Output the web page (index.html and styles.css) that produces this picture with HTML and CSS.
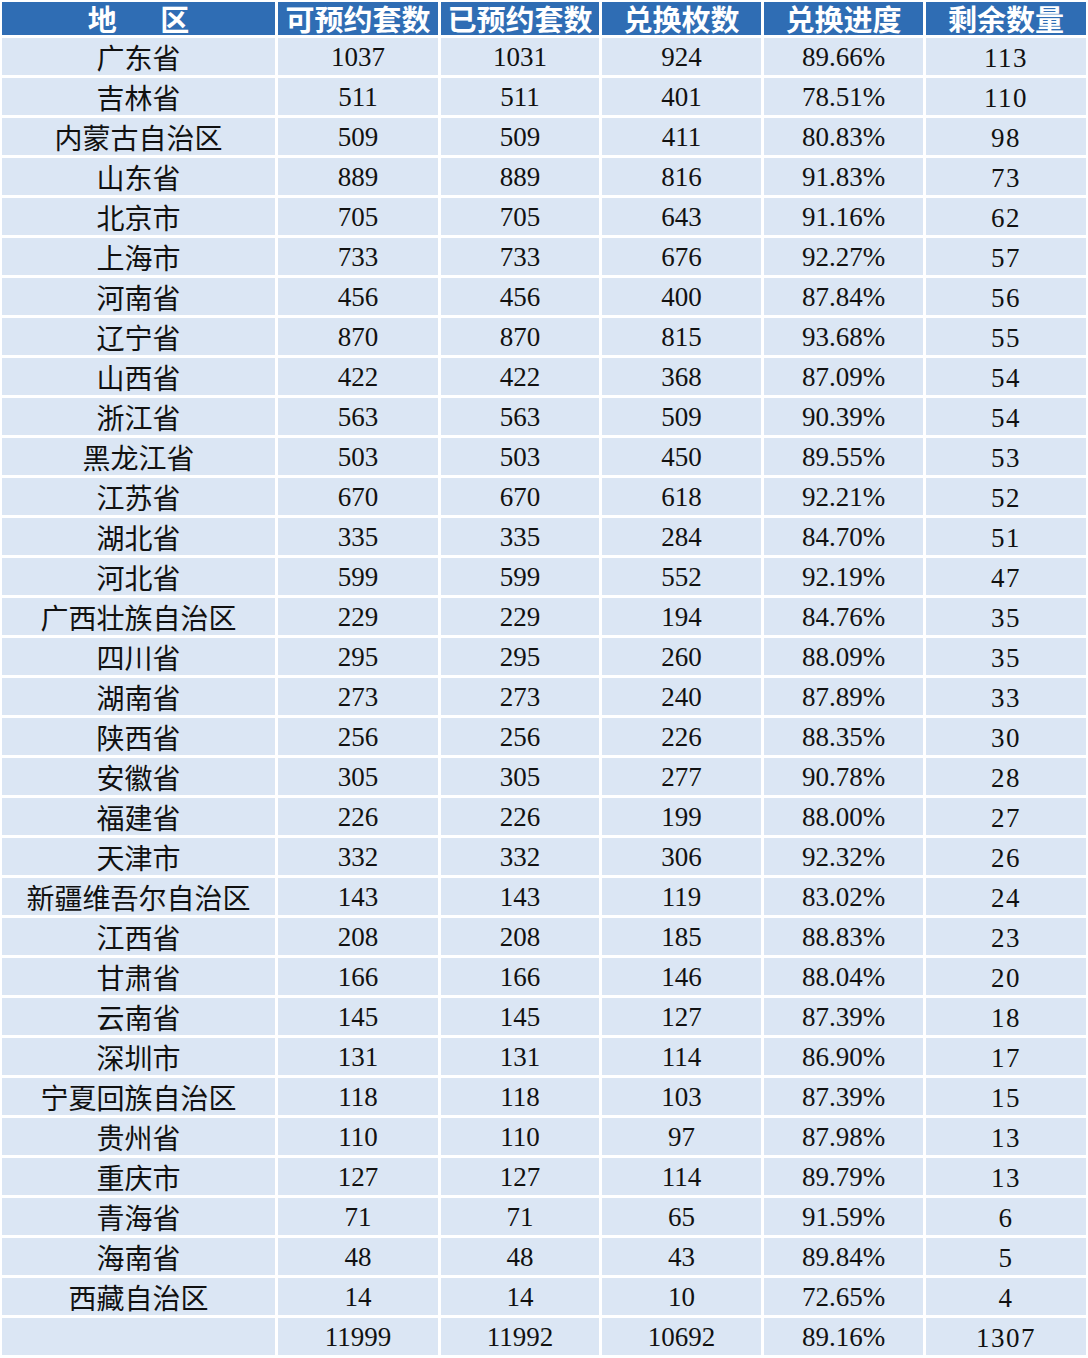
FILE: index.html
```html
<!DOCTYPE html>
<html lang="zh">
<head>
<meta charset="utf-8">
<link rel="stylesheet" href="styles.css">
</head>
<body>
<div class="sheet">
  <div class="h name-h">地&emsp;&ensp;区</div><div class="h">可预约套数</div><div class="h">已预约套数</div><div class="h">兑换枚数</div><div class="h">兑换进度</div><div class="h">剩余数量</div>
  <div class="c n">广东省</div><div class="c">1037</div><div class="c">1031</div><div class="c">924</div><div class="c">89.66%</div><div class="c r">113</div>
  <div class="c n">吉林省</div><div class="c">511</div><div class="c">511</div><div class="c">401</div><div class="c">78.51%</div><div class="c r">110</div>
  <div class="c n">内蒙古自治区</div><div class="c">509</div><div class="c">509</div><div class="c">411</div><div class="c">80.83%</div><div class="c r">98</div>
  <div class="c n">山东省</div><div class="c">889</div><div class="c">889</div><div class="c">816</div><div class="c">91.83%</div><div class="c r">73</div>
  <div class="c n">北京市</div><div class="c">705</div><div class="c">705</div><div class="c">643</div><div class="c">91.16%</div><div class="c r">62</div>
  <div class="c n">上海市</div><div class="c">733</div><div class="c">733</div><div class="c">676</div><div class="c">92.27%</div><div class="c r">57</div>
  <div class="c n">河南省</div><div class="c">456</div><div class="c">456</div><div class="c">400</div><div class="c">87.84%</div><div class="c r">56</div>
  <div class="c n">辽宁省</div><div class="c">870</div><div class="c">870</div><div class="c">815</div><div class="c">93.68%</div><div class="c r">55</div>
  <div class="c n">山西省</div><div class="c">422</div><div class="c">422</div><div class="c">368</div><div class="c">87.09%</div><div class="c r">54</div>
  <div class="c n">浙江省</div><div class="c">563</div><div class="c">563</div><div class="c">509</div><div class="c">90.39%</div><div class="c r">54</div>
  <div class="c n">黑龙江省</div><div class="c">503</div><div class="c">503</div><div class="c">450</div><div class="c">89.55%</div><div class="c r">53</div>
  <div class="c n">江苏省</div><div class="c">670</div><div class="c">670</div><div class="c">618</div><div class="c">92.21%</div><div class="c r">52</div>
  <div class="c n">湖北省</div><div class="c">335</div><div class="c">335</div><div class="c">284</div><div class="c">84.70%</div><div class="c r">51</div>
  <div class="c n">河北省</div><div class="c">599</div><div class="c">599</div><div class="c">552</div><div class="c">92.19%</div><div class="c r">47</div>
  <div class="c n">广西壮族自治区</div><div class="c">229</div><div class="c">229</div><div class="c">194</div><div class="c">84.76%</div><div class="c r">35</div>
  <div class="c n">四川省</div><div class="c">295</div><div class="c">295</div><div class="c">260</div><div class="c">88.09%</div><div class="c r">35</div>
  <div class="c n">湖南省</div><div class="c">273</div><div class="c">273</div><div class="c">240</div><div class="c">87.89%</div><div class="c r">33</div>
  <div class="c n">陕西省</div><div class="c">256</div><div class="c">256</div><div class="c">226</div><div class="c">88.35%</div><div class="c r">30</div>
  <div class="c n">安徽省</div><div class="c">305</div><div class="c">305</div><div class="c">277</div><div class="c">90.78%</div><div class="c r">28</div>
  <div class="c n">福建省</div><div class="c">226</div><div class="c">226</div><div class="c">199</div><div class="c">88.00%</div><div class="c r">27</div>
  <div class="c n">天津市</div><div class="c">332</div><div class="c">332</div><div class="c">306</div><div class="c">92.32%</div><div class="c r">26</div>
  <div class="c n">新疆维吾尔自治区</div><div class="c">143</div><div class="c">143</div><div class="c">119</div><div class="c">83.02%</div><div class="c r">24</div>
  <div class="c n">江西省</div><div class="c">208</div><div class="c">208</div><div class="c">185</div><div class="c">88.83%</div><div class="c r">23</div>
  <div class="c n">甘肃省</div><div class="c">166</div><div class="c">166</div><div class="c">146</div><div class="c">88.04%</div><div class="c r">20</div>
  <div class="c n">云南省</div><div class="c">145</div><div class="c">145</div><div class="c">127</div><div class="c">87.39%</div><div class="c r">18</div>
  <div class="c n">深圳市</div><div class="c">131</div><div class="c">131</div><div class="c">114</div><div class="c">86.90%</div><div class="c r">17</div>
  <div class="c n">宁夏回族自治区</div><div class="c">118</div><div class="c">118</div><div class="c">103</div><div class="c">87.39%</div><div class="c r">15</div>
  <div class="c n">贵州省</div><div class="c">110</div><div class="c">110</div><div class="c">97</div><div class="c">87.98%</div><div class="c r">13</div>
  <div class="c n">重庆市</div><div class="c">127</div><div class="c">127</div><div class="c">114</div><div class="c">89.79%</div><div class="c r">13</div>
  <div class="c n">青海省</div><div class="c">71</div><div class="c">71</div><div class="c">65</div><div class="c">91.59%</div><div class="c r">6</div>
  <div class="c n">海南省</div><div class="c">48</div><div class="c">48</div><div class="c">43</div><div class="c">89.84%</div><div class="c r">5</div>
  <div class="c n">西藏自治区</div><div class="c">14</div><div class="c">14</div><div class="c">10</div><div class="c">72.65%</div><div class="c r">4</div>
  <div class="c n"></div><div class="c">11999</div><div class="c">11992</div><div class="c">10692</div><div class="c">89.16%</div><div class="c r">1307</div>
</div>
</body>
</html>
```
FILE: styles.css
```css
html, body {
  margin: 0;
  padding: 0;
  background: #ffffff;
}
.sheet {
  display: grid;
  grid-template-columns: 273px 160px 158px 159px 159px 160px;
  grid-template-rows: 33px;
  grid-auto-rows: 37px;
  gap: 3px;
  padding: 2px 2px 0 2px;
  width: 1084px;
}
.h {
  background: #2f6db4;
  color: #ffffff;
  font-family: "Noto Sans CJK SC", sans-serif;
  font-weight: 700;
  font-size: 29px;
  line-height: 33px;
  text-align: center;
  white-space: nowrap;
}
.c {
  background: #dbe6f4;
  color: #111111;
  font-family: "Liberation Serif", serif;
  font-size: 27px;
  line-height: 35px;
  padding-top: 2px;
  text-align: center;
  white-space: nowrap;
}
.n {
  font-family: "Noto Sans CJK SC", sans-serif;
  font-size: 28px;
  line-height: 36px;
  padding-top: 1px;
}
.r {
  letter-spacing: 1.5px;
  padding-top: 4px;
  line-height: 33px;
}
```
